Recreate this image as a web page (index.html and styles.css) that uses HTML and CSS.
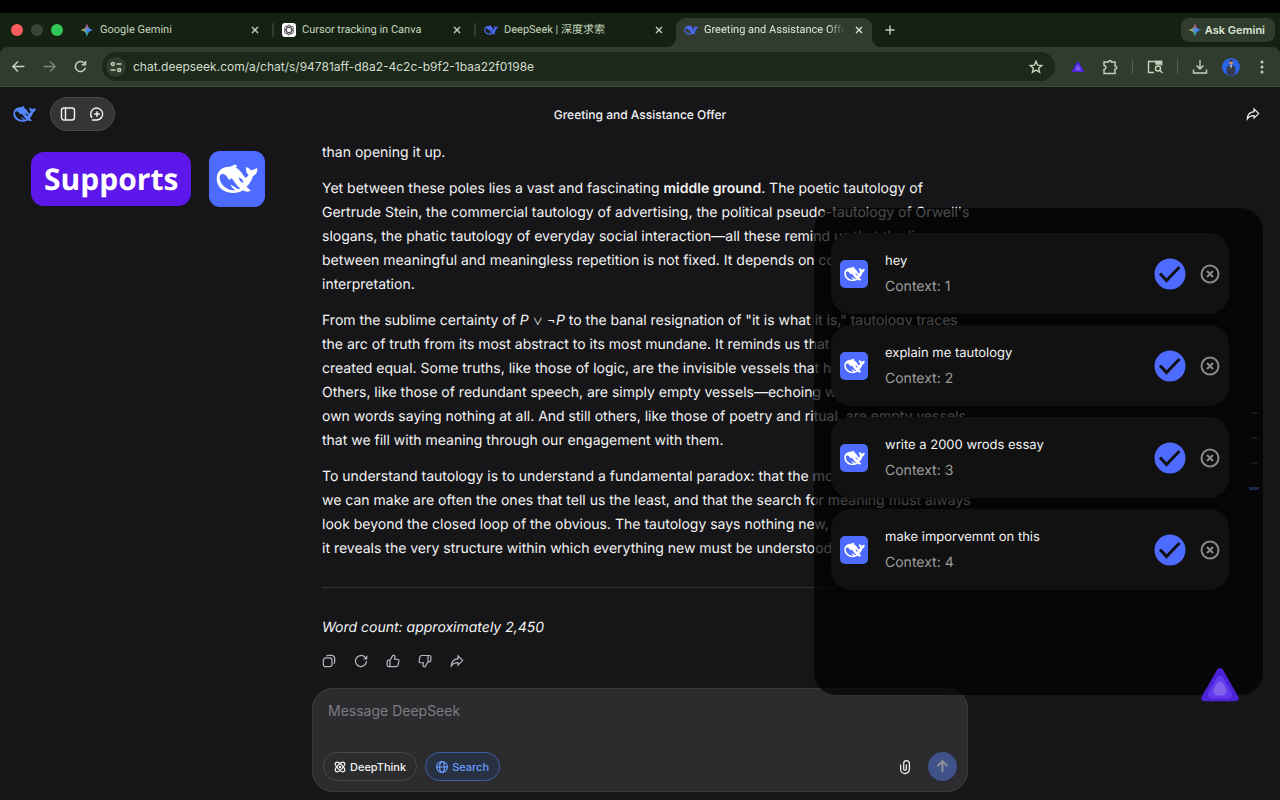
FILE: index.html
```
<!DOCTYPE html>
<html lang="en">
<head>
    <meta charset="UTF-8">
    <meta name="viewport" content="width=device-width, initial-scale=1.0">
    <title>Greeting and Assistance Offer - DeepSeek</title>
    <link rel="stylesheet" href="styles.css">
</head>
<body>
    <!-- shared icons -->
    <svg class="sprite" aria-hidden="true">
        <symbol id="whale" viewBox="34 50 126 90">
            <path fill="currentColor" fill-rule="evenodd" d="M36 94C36 72 52 58 74 58 80 58 84 54 90 52 98 52 97 57 94 61 104 66 110 74 115 82L122 92C127 89 130 86 132 82 126 78 122 70 125 59 130 61 135 63 138 69 144 68 150 66 157 62 160 72 154 84 145 86 142 98 135 108 126 118 129 122 134 125 138 130 131 135 122 134 115 129 98 140 72 140 54 128 42 119 36 108 36 94zM45 90C45 101 52 116 66 123 74 128 82 130 92 128 85 124 80 119 78 112 86 115 92 121 102 126 106 125 106 123 104 121 94 112 90 104 85 97 83 95 79 93 77 94 77 98 75 99 71 95 67 88 63 82 56 80 49 79 45 83 45 90zM102 91C109 91 115 97 117 106 110 106 105 101 102 91z"/>
        </symbol>
        <symbol id="spark" viewBox="0 0 16 16">
            <path fill="#4285f4" d="M8 .5C8.800 5 11 7.200 15.500 8 11 8.800 8.800 11 8 15.500 7.200 11 5 8.800.5 8 5 7.200 7.200 5 8 .5z"/>
            <path fill="url(#sparkGreen)" d="M8 .5C8.800 5 11 7.200 15.500 8 11 8.800 8.800 11 8 15.500 7.200 11 5 8.800.5 8 5 7.200 7.200 5 8 .5z"/>
            <path fill="url(#sparkRed)" d="M8 .5C8.800 5 11 7.200 15.500 8 11 8.800 8.800 11 8 15.500 7.200 11 5 8.800.5 8 5 7.200 7.200 5 8 .5z"/>
            <path fill="url(#sparkYellow)" d="M8 .5C8.800 5 11 7.200 15.500 8 11 8.800 8.800 11 8 15.500 7.200 11 5 8.800.5 8 5 7.200 7.200 5 8 .5z"/>
        </symbol>
        <symbol id="close" viewBox="0 0 10 10">
            <path d="M2 2l6 6M8 2L2 8"/>
        </symbol>
        <symbol id="share" viewBox="0 0 16 16">
            <path d="M9.200 2.200L14.500 7.500 9.200 12.700V9.800C6 9.700 3.300 10.800 1.500 13.600 1.700 9 4.500 5.800 9.200 5.300z"/>
        </symbol>
        <symbol id="check" viewBox="0 0 32 32">
            <circle cx="16" cy="16" r="15.500" fill="#4d6bfe" stroke="none"/>
            <path d="M6 15.500l6.500 7L25.500 9" fill="none" stroke="#111" stroke-width="3"/>
        </symbol>
        <symbol id="remove" viewBox="0 0 20 20">
            <circle cx="10" cy="10" r="8.500"/>
            <path d="M7 7l6 6M13 7l-6 6"/>
        </symbol>
        <symbol id="prism" viewBox="0 0 38 34">
            <path fill="#4c22d6" d="M15.800 2.200c1.500-2.600 4.900-2.600 6.400 0l14.900 26c1.500 2.600 0 5-3 5H3.900c-3 0-4.500-2.400-3-5z"/>
            <path fill="#6339ee" d="M15.800 9.500c1.500-2.300 4.900-2.300 6.400 0l8.300 15c1.500 3-.2 6-3.500 6H11c-3.300 0-5-3-3.500-6z"/>
            <path fill="#8160ec" d="M15.500 15.500c1.600-2.400 5.400-2.400 7 0l2.700 5.500c1.500 3.500-.7 6.500-4.200 6.500h-4c-3.500 0-5.700-3-4.200-6.500z"/>
        </symbol>
        <defs>
            <linearGradient id="sparkRed" x1="0" y1="0" x2="0" y2="1">
                <stop offset=".15" stop-color="#f04a52"/>
                <stop offset=".45" stop-color="#f04a52" stop-opacity="0"/>
            </linearGradient>
            <linearGradient id="sparkGreen" x1="0" y1="1" x2="0" y2="0">
                <stop offset=".15" stop-color="#1fb456"/>
                <stop offset=".45" stop-color="#1fb456" stop-opacity="0"/>
            </linearGradient>
            <linearGradient id="sparkYellow" x1="0" y1="0" x2="1" y2="0">
                <stop offset=".15" stop-color="#f7bd10"/>
                <stop offset=".5" stop-color="#8fb33a" stop-opacity="0"/>
            </linearGradient>
        </defs>
    </svg>

    <div class="screen">
        <header class="browser">
            <div class="tabs">
                <div class="lights"><i class="red"></i><i class="grey"></i><i class="green"></i></div>
                <div class="tab">
                    <svg class="favicon"><use href="#spark"/></svg>
                    <span class="tab-title">Google Gemini</span>
                    <button class="tab-close" aria-label="Close tab"><svg><use href="#close"/></svg></button>
                </div>
                <div class="tab divided">
                    <svg class="favicon" viewBox="0 0 14 14">
                        <rect width="14" height="14" rx="3" fill="#fff" stroke="none"/>
                        <g fill="none" stroke="#222" stroke-width=".7">
                            <ellipse cx="7" cy="7" rx="2.500" ry="5"/>
                            <ellipse cx="7" cy="7" rx="2.500" ry="5" transform="rotate(60 7 7)"/>
                            <ellipse cx="7" cy="7" rx="2.500" ry="5" transform="rotate(120 7 7)"/>
                        </g>
                    </svg>
                    <span class="tab-title">Cursor tracking in Canva</span>
                    <button class="tab-close" aria-label="Close tab"><svg><use href="#close"/></svg></button>
                </div>
                <div class="tab divided">
                    <svg class="favicon blue"><use href="#whale"/></svg>
                    <span class="tab-title">DeepSeek | 深度求索</span>
                    <button class="tab-close" aria-label="Close tab"><svg><use href="#close"/></svg></button>
                </div>
                <div class="tab active">
                    <svg class="favicon blue"><use href="#whale"/></svg>
                    <span class="tab-title">Greeting and Assistance Offer</span>
                    <button class="tab-close" aria-label="Close tab"><svg><use href="#close"/></svg></button>
                </div>
                <button class="new-tab" aria-label="New tab">
                    <svg viewBox="0 0 10 10"><path d="M5 .5v9M.5 5h9"/></svg>
                </button>
                <button class="ask"><svg class="favicon"><use href="#spark"/></svg>Ask Gemini</button>
            </div>

            <div class="toolbar">
                <div class="nav">
                    <button aria-label="Back"><svg viewBox="0 0 14 14"><path d="M12.500 7H2M6.500 2.300L1.800 7l4.700 4.700"/></svg></button>
                    <button class="dim" aria-label="Forward"><svg viewBox="0 0 14 14"><path d="M1.500 7H12M7.500 2.300L12.200 7l-4.700 4.700"/></svg></button>
                    <button aria-label="Reload"><svg viewBox="0 0 14 14"><path d="M11.500 8.200a4.700 4.700 0 1 1-1.200-4.500L11.500 5M11.700 1.800v3.500H8.200"/></svg></button>
                </div>
                <div class="omnibox">
                    <button class="site-info" aria-label="Site information">
                        <svg viewBox="0 0 12 12"><circle cx="2.800" cy="3" r="1.500"/><path d="M6.500 3h5M.5 9h5"/><circle cx="9.200" cy="9" r="1.500"/></svg>
                    </button>
                    <input class="url" type="text" aria-label="Address" value="chat.deepseek.com/a/chat/s/94781aff-d8a2-4c2c-b9f2-1baa22f0198e">
                    <button class="star" aria-label="Bookmark">
                        <svg viewBox="0 0 14 14"><path d="M7 1.300l1.600 3.900 4.100.3-3.100 2.700 1 4.100L7 10.100l-3.600 2.200 1-4.100L1.300 5.500l4.100-.3z"/></svg>
                    </button>
                </div>
                <div class="extensions">
                    <button class="ext" aria-label="Context extension"><svg class="mini-prism"><use href="#prism"/></svg></button>
                    <button aria-label="Extensions"><svg viewBox="0 0 16 16"><path d="M2 3h4.500c-.3-2 3.300-2 3 0H13v4c2.300-.3 2.300 3.300 0 3v4.500H2v-4c2.600-.3 2.600-3.700 0-4z"/></svg></button>
                    <span class="bar"></span>
                    <button aria-label="Search tabs"><svg viewBox="0 0 16 16"><path d="M7 13.500H1.500v-11h13v4"/><path fill="currentColor" d="M9 2.500h5.500V5H9z"/><circle cx="11" cy="9.500" r="2.500"/><path d="M13 11.500l2.500 2.500"/></svg></button>
                    <span class="bar"></span>
                    <button aria-label="Downloads"><svg viewBox="0 0 16 16"><path d="M8 1v8.500M4.500 6.500L8 10l3.500-3.500M1.500 10.500V14h13v-3.500"/></svg></button>
                    <button aria-label="Profile">
                        <svg class="avatar" viewBox="0 0 18 18">
                            <circle cx="9" cy="9" r="9" fill="#2b63e8"/>
                            <path fill="#343a4c" d="M4.500 9.500L7.500 7h3l3 2.500-.5 6.500q-4 2.500-8 0z"/>
                            <path fill="#d8dce5" d="M8 7h2l-1 4z"/>
                            <circle cx="9" cy="4.600" r="2" fill="#c69477"/>
                            <path fill="#221d20" d="M7 4.300q0-2.600 2-2.600t2 2.600L10 3.500H8z"/>
                        </svg>
                    </button>
                    <button aria-label="Menu"><svg viewBox="0 0 16 16"><g fill="currentColor" stroke="none"><circle cx="8" cy="3" r="1.500"/><circle cx="8" cy="8" r="1.500"/><circle cx="8" cy="13" r="1.500"/></g></svg></button>
                </div>
            </div>
        </header>

        <main class="app">
            <div class="app-head">
                <div class="head-left">
                    <svg class="logo"><use href="#whale"/></svg>
                    <div class="pill">
                        <button aria-label="Open sidebar"><svg viewBox="0 0 16 16"><rect x="1.500" y="2" width="13" height="12" rx="2.500"/><path d="M5.500 2v12"/></svg></button>
                        <button aria-label="New chat"><svg viewBox="0 0 16 16"><path d="M3 11.800A6 6 0 1 1 8 14H2.800M8 5.200v5.600M5.200 8h5.600"/></svg></button>
                    </div>
                </div>
                <h1>Greeting and Assistance Offer</h1>
                <button class="head-share" aria-label="Share"><svg><use href="#share"/></svg></button>
            </div>

            <div class="promo">
                <strong>Supports</strong>
                <span class="badge"><svg><use href="#whale"/></svg></span>
            </div>

            <div class="chat">
                <article class="message">
                    <p>than opening it up.</p>
                    <p>Yet between these poles lies a vast and fascinating <b>middle ground</b>. The poetic tautology of<br>
                    Gertrude Stein, the commercial tautology of advertising, the political pseudo-tautology of Orwell's<br>
                    slogans, the phatic tautology of everyday social interaction—all these remind us that the line<br>
                    between meaningful and meaningless repetition is not fixed. It depends on context,<br>
                    interpretation.</p>
                    <p>From the sublime certainty of <i>P</i> <span class="op">∨</span> ¬<i>P</i> to the banal resignation of "it is what it is," tautology traces<br>
                    the arc of truth from its most abstract to its most mundane. It reminds us that not<br>
                    created equal. Some truths, like those of logic, are the invisible vessels that hold<br>
                    Others, like those of redundant speech, are simply empty vessels—echoing with<br>
                    own words saying nothing at all. And still others, like those of poetry and ritual, are empty vessels<br>
                    that we fill with meaning through our engagement with them.</p>
                    <p>To understand tautology is to understand a fundamental paradox: that the most<br>
                    we can make are often the ones that tell us the least, and that the search for meaning must always<br>
                    look beyond the closed loop of the obvious. The tautology says nothing new, but<br>
                    it reveals the very structure within which everything new must be understood.</p>
                    <hr>
                    <p><em>Word count: approximately 2,450</em></p>
                </article>

                <div class="actions">
                    <button aria-label="Copy"><svg viewBox="0 0 16 16"><rect x="1.500" y="4.500" width="10" height="10" rx="2.800"/><path d="M5 2.200Q6 1.500 7.500 1.500h3q4 0 4 4v3q0 2-1 2.700"/></svg></button>
                    <button aria-label="Regenerate"><svg viewBox="0 0 16 16"><path d="M14.300 8a6.300 6.300 0 1 1-2-4.600l2 2.100M14.500 2v3.700H11"/></svg></button>
                    <button aria-label="Good response"><svg viewBox="0 0 16 16"><path id="thumb" d="M4.500 7v7.300M1.300 8.500Q1.300 7 3 7h1.700L7.500 2.200Q8 1 9.200 1.500 10.700 2 10.300 4L9.800 6H13q2 0 1.700 2l-.8 4.500q-.4 1.800-2.200 1.800H3q-1.700 0-1.700-1.700z"/></svg></button>
                    <button aria-label="Bad response"><svg class="flip" viewBox="0 0 16 16"><use href="#thumb"/></svg></button>
                    <button aria-label="Share"><svg><use href="#share"/></svg></button>
                </div>

                <form class="composer">
                    <textarea aria-label="Message" placeholder="Message DeepSeek" rows="1"></textarea>
                    <div class="composer-row">
                        <button type="button" class="chip">
                            <svg viewBox="0 0 14 14"><ellipse cx="7" cy="7" rx="3" ry="7" transform="rotate(45 7 7)"/><ellipse cx="7" cy="7" rx="3" ry="7" transform="rotate(-45 7 7)"/><circle cx="7" cy="7" r=".8"/></svg>DeepThink
                        </button>
                        <button type="button" class="chip on">
                            <svg viewBox="0 0 14 14"><circle cx="7" cy="7" r="6.300"/><ellipse cx="7" cy="7" rx="2.800" ry="6.300"/><path d="M.7 7h12.600"/></svg>Search
                        </button>
                        <button type="button" class="attach" aria-label="Attach"><svg viewBox="0 0 16 16"><path d="M3 5v5.500a5 5 0 0 0 10 0V4a3 3 0 0 0-6.500 0v6.200a1.500 1.500 0 0 0 3 0V5"/></svg></button>
                        <button type="button" class="send" aria-label="Send"><svg viewBox="0 0 16 16"><path d="M8 14V2.500M2.800 7.500L8 2.300l5.200 5.200"/></svg></button>
                    </div>
                </form>
            </div>

            <div class="ticks"><i></i><i></i><i></i><i class="now"></i></div>

            <aside class="panel">
                <ul>
                    <li class="card">
                        <span class="badge"><svg><use href="#whale"/></svg></span>
                        <div class="card-text"><h2>hey</h2><p>Context: 1</p></div>
                        <button class="pick" aria-label="Use context 1"><svg><use href="#check"/></svg></button>
                        <button class="drop" aria-label="Remove context 1"><svg><use href="#remove"/></svg></button>
                    </li>
                    <li class="card">
                        <span class="badge"><svg><use href="#whale"/></svg></span>
                        <div class="card-text"><h2>explain me tautology</h2><p>Context: 2</p></div>
                        <button class="pick" aria-label="Use context 2"><svg><use href="#check"/></svg></button>
                        <button class="drop" aria-label="Remove context 2"><svg><use href="#remove"/></svg></button>
                    </li>
                    <li class="card">
                        <span class="badge"><svg><use href="#whale"/></svg></span>
                        <div class="card-text"><h2>write a 2000 wrods essay</h2><p>Context: 3</p></div>
                        <button class="pick" aria-label="Use context 3"><svg><use href="#check"/></svg></button>
                        <button class="drop" aria-label="Remove context 3"><svg><use href="#remove"/></svg></button>
                    </li>
                    <li class="card">
                        <span class="badge"><svg><use href="#whale"/></svg></span>
                        <div class="card-text"><h2>make imporvemnt on this</h2><p>Context: 4</p></div>
                        <button class="pick" aria-label="Use context 4"><svg><use href="#check"/></svg></button>
                        <button class="drop" aria-label="Remove context 4"><svg><use href="#remove"/></svg></button>
                    </li>
                </ul>
                <button class="launcher" aria-label="Toggle contexts"><svg><use href="#prism"/></svg></button>
            </aside>
        </main>
    </div>
</body>
</html>
```
FILE: styles.css
```
* {
    box-sizing: border-box;
}
body {
    margin: 0;
    background: #000;
    color: #f3f3f4;
    font-family: Inter, "Noto Sans CJK SC", sans-serif;
    font-size: 14px;
    text-rendering: geometricPrecision;
}
button {
    display: flex;
    align-items: center;
    justify-content: center;
    padding: 0;
    border: none;
    background: none;
    color: inherit;
    font: inherit;
    cursor: pointer;
}
svg {
    display: block;
    flex: none;
    fill: none;
    stroke: currentColor;
    stroke-width: 1.4;
    overflow: visible;
}
.sprite {
    position: absolute;
    width: 0;
    height: 0;
}
#whale, #spark, #prism {
    stroke: none;
}
.screen {
    min-height: 100vh;
    display: flex;
    flex-direction: column;
    padding-top: 13px;
}

/* browser chrome */
.browser {
    background: #152213;
    color: #c3d3bb;
    font-size: 12px;
}
.tabs {
    display: flex;
    align-items: center;
    height: 34px;
    padding: 0 5px 0 11px;
}
.lights {
    display: flex;
    gap: 8px;
    margin-right: 7px;
}
.lights i {
    width: 12px;
    height: 12px;
    border-radius: 50%;
}
.red {
    background: #ff5c5e;
}
.grey {
    background: #394636;
}
.green {
    background: #33c659;
}
.tab {
    position: relative;
    display: flex;
    align-items: center;
    gap: 6px;
    flex: 0 1 202px;
    min-width: 0;
    height: 34px;
    padding: 0 12px 0 10px;
}
.tab.divided::before {
    content: "";
    position: absolute;
    left: 0;
    top: 10px;
    width: 2px;
    height: 14px;
    background: #303d2d;
}
.tab-title {
    flex: 1;
    min-width: 0;
    overflow: hidden;
    white-space: nowrap;
    font: 11px/16px Roboto, "Noto Sans CJK SC", sans-serif;
}
.favicon {
    width: 14px;
    height: 14px;
}
.favicon.blue {
    color: #4d6bfe;
}
.tab-close svg {
    width: 10px;
    height: 10px;
}
.tab.active {
    flex-basis: 196px;
    height: 29px;
    align-self: flex-end;
    padding: 0 8px;
    padding-bottom: 5px;
    border-radius: 9px 9px 0 0;
    background: #303d2e;
    color: #dbe6d5;
}
.tab.active::before,
.tab.active::after {
    content: "";
    position: absolute;
    bottom: 0;
    width: 9px;
    height: 9px;
}
.tab.active::before {
    right: 100%;
    background: radial-gradient(circle at 0 0, transparent 9px, #303d2e 9px);
}
.tab.active::after {
    left: 100%;
    background: radial-gradient(circle at 100% 0, transparent 9px, #303d2e 9px);
}
.tab.active .tab-title {
    mask-image: linear-gradient(to right, #000 86%, transparent 98%);
}
.new-tab {
    margin-left: 13px;
}
.new-tab svg {
    width: 10px;
    height: 10px;
}
.ask {
    gap: 3px;
    height: 24px;
    margin-left: auto;
    padding: 0 10px 0 7px;
    border-radius: 8px;
    background: #303d2e;
    color: #dbe6d5;
    font-size: 11px;
    font-weight: 600;
    white-space: nowrap;
}
.toolbar {
    display: flex;
    align-items: center;
    height: 40px;
    padding: 0 10px 0 11px;
    border-bottom: 1px solid #414d3f;
    border-radius: 8px 8px 0 0;
    background: #303d2e;
}
.nav {
    display: flex;
    gap: 16px;
    margin-right: 14px;
}
.nav svg {
    width: 15px;
    height: 15px;
}
.dim {
    opacity: .5;
}
.omnibox {
    display: flex;
    align-items: center;
    flex: 1;
    height: 29px;
    padding: 0 12px 0 4px;
    border-radius: 15px;
    background: #1c2819;
}
.site-info {
    width: 20px;
    height: 20px;
    border-radius: 50%;
    background: #303d2e;
}
.site-info svg {
    width: 12px;
    height: 12px;
}
.url {
    flex: 1;
    min-width: 0;
    padding: 0 7px;
    border: none;
    outline: none;
    background: none;
    color: #d3ddcd;
    font: 12px Inter, sans-serif;
}
.star svg {
    width: 14px;
    height: 14px;
}
.extensions {
    display: flex;
    align-items: center;
    gap: 14px;
    margin-left: 17px;
}
.extensions svg {
    width: 16px;
    height: 16px;
}
.ext {
    margin-right: 4px;
}
.extensions .mini-prism {
    width: 12px;
    height: 12px;
}
.extensions .avatar {
    width: 18px;
    height: 18px;
    stroke: none;
}
.bar {
    width: 1px;
    height: 14px;
    background: #53614e;
}

/* chat page */
.app {
    position: relative;
    flex: 1;
    background: #161618;
    padding-bottom: 9px;
}
.app-head {
    display: grid;
    grid-template-columns: 1fr auto 1fr;
    align-items: center;
    height: 54px;
    padding: 0 13px;
}
.head-left {
    display: flex;
    align-items: center;
    gap: 14px;
}
.logo {
    width: 23px;
    height: 18px;
    color: #5686fe;
}
.pill {
    display: flex;
    align-items: center;
    gap: 13px;
    height: 34px;
    padding: 0 9px;
    border: 1px solid #49494c;
    border-radius: 17px;
    background: #353538;
}
.pill svg {
    width: 16px;
    height: 16px;
}
.app-head h1 {
    margin: 0;
    font-size: 12px;
    font-weight: 500;
}
.head-share {
    justify-self: end;
    padding-right: 7px;
}
.head-share svg {
    width: 14px;
    height: 14px;
}
.promo {
    position: absolute;
    top: 64px;
    left: 31px;
    display: flex;
    align-items: center;
    gap: 18px;
}
.promo strong {
    padding: 0 13px;
    border-radius: 13px;
    background: #5d17eb;
    color: #fff;
    font: bold 30px/54px "Open Sans", sans-serif;
}
.badge {
    display: flex;
    align-items: center;
    justify-content: center;
    flex: none;
    width: 28px;
    height: 28px;
    border-radius: 5px;
    background: #4d6bfe;
    color: #fff;
}
.badge svg {
    width: 21px;
    height: 16px;
}
.promo .badge {
    width: 56px;
    height: 56px;
    border-radius: 11px;
}
.promo .badge svg {
    width: 42px;
    height: 30px;
}
.chat {
    max-width: 656px;
    margin: 0 auto;
}
.message {
    padding: 0 10px;
    line-height: 24px;
    white-space: nowrap;
}
.message p {
    margin: 0 0 12px;
}
.message b {
    font-weight: 600;
}
.op {
    font-size: 10px;
    line-height: 1;
}
.message hr {
    margin: 26px 0 28px;
    border: none;
    border-top: 1px solid #343437;
}
.actions {
    display: flex;
    gap: 18px;
    margin: 14px 0 20px 10px;
    color: #b5b7bc;
}
.actions svg {
    width: 14px;
    height: 14px;
}
.flip {
    transform: rotate(180deg);
}
.composer {
    padding: 12px 10px 10px;
    border: 1px solid #39393c;
    border-radius: 20px;
    background: #2c2c2e;
}
.composer textarea {
    display: block;
    width: 100%;
    height: 51px;
    padding: 0 5px;
    border: none;
    outline: none;
    resize: none;
    background: none;
    color: #f3f3f4;
    font: 14px/20px Inter, sans-serif;
}
.composer textarea::placeholder {
    color: #7c7c82;
}
.composer-row {
    display: flex;
    align-items: center;
    gap: 8px;
}
.chip {
    gap: 4px;
    height: 29px;
    padding: 0 10px;
    border: 1px solid #48484b;
    border-radius: 15px;
    font-size: 11px;
    font-weight: 500;
}
.chip svg {
    width: 12px;
    height: 12px;
}
.chip.on {
    border-color: #3e5fa8;
    background: #283142;
    color: #679efe;
}
.attach {
    margin-left: auto;
    margin-right: 8px;
}
.attach svg {
    width: 14px;
    height: 14px;
}
.send {
    width: 29px;
    height: 29px;
    border-radius: 50%;
    background: #3f538a;
    color: #919298;
}
.send svg {
    width: 15px;
    height: 15px;
    stroke-width: 2;
}
.ticks {
    position: absolute;
    top: 325px;
    right: 21px;
    display: flex;
    flex-direction: column;
    align-items: center;
    gap: 23px;
    width: 10px;
}
.ticks i {
    width: 7px;
    height: 2px;
    background: #56565a;
}
.ticks .now {
    width: 10px;
    height: 3px;
    background: #5686fe;
}

/* context list on top of the chat */
.panel {
    position: absolute;
    top: 121px;
    right: 17px;
    width: 449px;
    height: 487px;
    padding: 25px 34px 0 17px;
    border-radius: 22px;
    background: rgba(0, 0, 0, .7);
}
.panel ul {
    display: flex;
    flex-direction: column;
    gap: 11px;
    margin: 0;
    padding: 0;
    list-style: none;
}
.card {
    display: flex;
    align-items: center;
    height: 81px;
    padding: 0 9px;
    border-radius: 20px;
    background: #111;
    box-shadow: 0 2px 6px rgba(0, 0, 0, .4);
}
.card-text {
    flex: 1;
    padding-left: 17px;
}
.card h2,
.card p {
    margin: 0;
    font-size: 13px;
    font-weight: 400;
    line-height: 26px;
}
.card p {
    color: #9c9c9c;
    font-size: 14px;
}
.pick svg {
    width: 32px;
    height: 32px;
}
.drop {
    margin-left: 14px;
    color: #8a8a8a;
}
.drop svg {
    width: 20px;
    height: 20px;
    stroke-width: 2;
}
.launcher {
    position: absolute;
    right: 24px;
    bottom: -7px;
}
.launcher svg {
    width: 38px;
    height: 34px;
}
```
